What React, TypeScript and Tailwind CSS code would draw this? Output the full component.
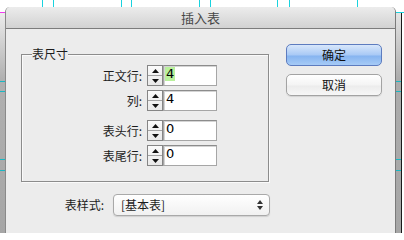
import React from "react";

const guideXs = [42, 53, 121, 131, 199, 210, 277, 289, 357];
const sideGuideYs = [81, 91, 159, 170];

function Stepper() {
  return (
    <div className="flex h-[21px] w-[16px] shrink-0 flex-col border border-[#858585] bg-[linear-gradient(to_bottom,#fbfbfb,#e9e9e9)]">
      <div className="flex flex-1 items-center justify-center border-b border-[#a2a2a2]">
        <svg width="7" height="4" viewBox="0 0 7 4">
          <path d="M3.5 0L7 4H0z" fill="#111" />
        </svg>
      </div>
      <div className="flex flex-1 items-center justify-center">
        <svg width="7" height="4" viewBox="0 0 7 4">
          <path d="M0 0H7L3.5 4z" fill="#111" />
        </svg>
      </div>
    </div>
  );
}

function NumberRow({ label, value, selected = false }: { label: string; value: string; selected?: boolean }) {
  return (
    <div className="flex h-[21px] items-center">
      <span className="w-[124px] pr-[4px] text-right text-[12px] leading-[14px] text-[#1c1c1c]">{label}</span>
      <span className="ml-[1px] flex">
        <Stepper />
        <span className="flex h-[21px] w-[54px] items-start border border-[#a6a6a6] border-t-[#8c8c8c] bg-white pl-[1px] pt-[1px] shadow-[inset_1px_1px_0_#d4d4d4]">
          <span
            className={`px-[1px] text-[13px] leading-[14px] text-black [font-family:'DejaVu_Sans',sans-serif] ${
              selected ? "bg-[#b9f19c]" : ""
            }`}
          >
            {value}
          </span>
        </span>
      </span>
    </div>
  );
}

export default function App() {
  return (
    <div className="relative h-[233px] w-[404px] overflow-hidden bg-white [font-family:'Noto_Sans_CJK_SC',sans-serif]">
      {/* background window edges behind the dialog */}
      <div className="absolute bottom-0 left-0 top-[13px] w-[6px] bg-[linear-gradient(to_bottom,#ececec,#b0b0b0_30%,#a6a6a6)]" />
      <div className="absolute bottom-0 left-[396px] top-[13px] w-[6px] bg-[linear-gradient(to_bottom,#e4e4e4,#acacac_30%,#a6a6a6)]" />
      <div className="absolute bottom-0 left-[401px] top-[13px] w-[1px] bg-[#1a1a1a]" />

      {/* layout guides */}
      {guideXs.map((x) => (
        <div key={x} className="absolute top-0 h-[12px] w-[1px] bg-[#19d3df]" style={{ left: x }} />
      ))}
      <div className="absolute left-0 top-[12px] h-[1px] w-[8px] bg-[#f23cf2]" />
      <div className="absolute left-[394px] top-[12px] h-[1px] w-[10px] bg-[#19d3df]" />
      {sideGuideYs.map((y) => (
        <React.Fragment key={y}>
          <div className="absolute left-0 h-[1px] w-[6px] bg-[#19b8c4]" style={{ top: y }} />
          <div className="absolute left-[396px] h-[1px] w-[5px] bg-[#19b8c4]" style={{ top: y }} />
        </React.Fragment>
      ))}

      {/* dialog */}
      <div className="relative ml-[5px] mt-[7px] h-[226px] w-[391px] rounded-t-[5px] border-x border-l-[#8a8a8a] border-r-[#7a7a7a] bg-[#ececec]">
        <div className="flex h-[22px] items-center justify-center rounded-t-[5px] border-b border-[#7c7c7c] bg-[linear-gradient(to_bottom,#ececec,#d2d2d2)] text-[13px] leading-[16px] text-[#474747]">
          插入表
        </div>

        <div className="flex pl-[15px]">
          <div className="flex flex-col">
            <div className="relative mt-[25px] h-[128px] w-[248px] border border-[#8c8c8c] pt-[10px] shadow-[1px_1px_0_#fafafa,inset_1px_1px_0_#fafafa]">
              <span className="absolute left-[10px] top-[-8px] bg-[#ececec] text-[12px] leading-[14px] text-[#1c1c1c]">
                表尺寸
              </span>
              <div className="flex flex-col">
                <NumberRow label="正文行:" value="4" selected />
                <div className="mt-[4px]">
                  <NumberRow label="列:" value="4" />
                </div>
                <div className="mt-[9px]">
                  <NumberRow label="表头行:" value="0" />
                </div>
                <div className="mt-[4px]">
                  <NumberRow label="表尾行:" value="0" />
                </div>
              </div>
            </div>

            <div className="mt-[12px] flex h-[22px] items-center">
              <span className="w-[86px] pr-[3px] text-right text-[12px] leading-[14px] text-[#1c1c1c]">表样式:</span>
              <div className="ml-[6px] flex h-[22px] w-[157px] items-center justify-between rounded-[4px] border border-[#a9a9a9] bg-[linear-gradient(to_bottom,#ffffff,#f1f1f1)] pl-[7px] pr-[6px] shadow-[0_1px_1px_rgba(0,0,0,0.12)]">
                <span className="text-[12px] leading-[14px] text-[#1c1c1c]">[基本表]</span>
                <svg width="6" height="10" viewBox="0 0 6 10">
                  <path d="M3 0L6 4H0z" fill="#333" />
                  <path d="M0 6H6L3 10z" fill="#333" />
                </svg>
              </div>
            </div>
          </div>

          <div className="ml-[16px] mt-[15px] flex flex-col gap-[8px]">
            <button className="h-[22px] w-[96px] rounded-[5px] border border-[#5d7cbf] bg-[linear-gradient(to_bottom,#d8e7fb,#a8c9f5_50%,#86b4f0_55%,#a6cbf6)] text-[12px] leading-[14px] text-[#111]">
              确定
            </button>
            <button className="h-[22px] w-[96px] rounded-[5px] border border-[#a3a3a3] bg-[linear-gradient(to_bottom,#ffffff,#f4f4f4_50%,#ececec_55%,#f7f7f7)] text-[12px] leading-[14px] text-[#111] shadow-[0_1px_1px_rgba(0,0,0,0.1)]">
              取消
            </button>
          </div>
        </div>
      </div>
    </div>
  );
}
